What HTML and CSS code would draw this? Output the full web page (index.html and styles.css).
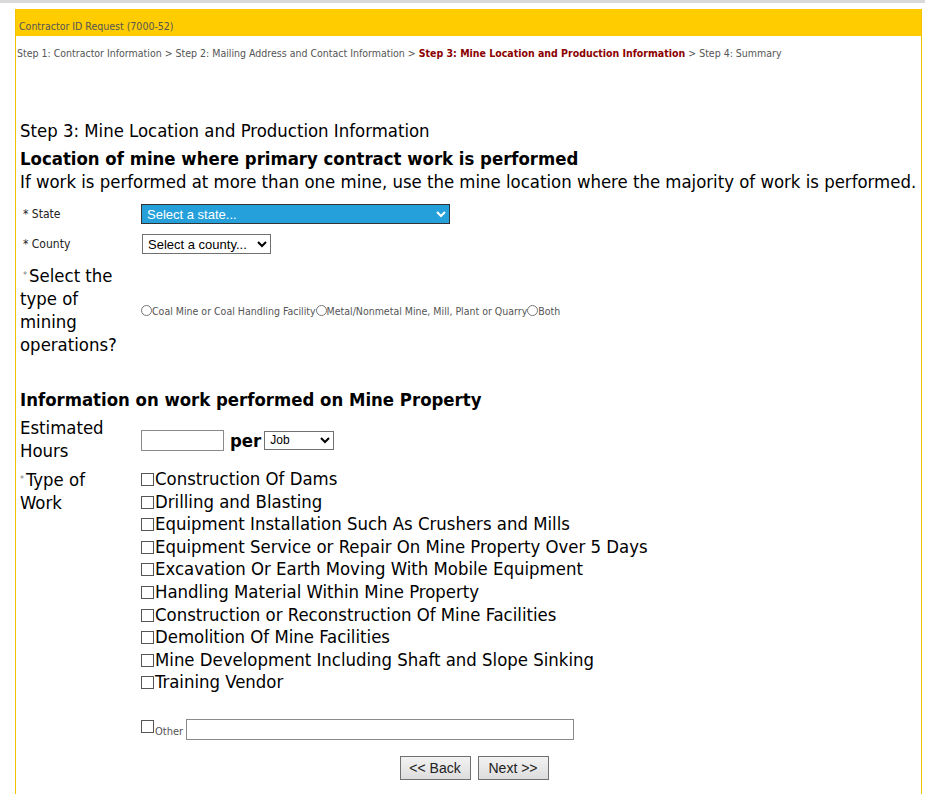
FILE: index.html
```html
<!DOCTYPE html>
<html lang="en">
<head>
  <meta charset="UTF-8">
  <title>Contractor ID Request (7000-52)</title>
  <link rel="stylesheet" href="styles.css">
</head>
<body>
<div class="topline"></div>
<div class="page">
  <div class="titlebar">Contractor ID Request (7000-52)</div>
  <div class="crumbs">
    Step 1: Contractor Information &gt; Step 2: Mailing Address and Contact Information &gt;
    <span class="current">Step 3: Mine Location and Production Information</span> &gt; Step 4: Summary
  </div>

  <div class="content">
    <div class="steptitle">Step 3: Mine Location and Production Information</div>
    <div class="section">Location of mine where primary contract work is performed</div>
    <div class="note">If work is performed at more than one mine, use the mine location where the majority of work is performed.</div>

    <div class="form first">
      <div class="lbl small">* State</div>
      <div class="fld">
        <select class="sel state"><option>Select a state...</option></select>
      </div>

      <div class="lbl small">* County</div>
      <div class="fld">
        <select class="sel county"><option>Select a county...</option></select>
      </div>

      <div class="lbl big mining"><span class="req">*</span>Select the type of mining operations?</div>
      <div class="fld radios">
        <label><input type="radio" name="op">Coal Mine or Coal Handling Facility</label><label><input type="radio" name="op">Metal/Nonmetal Mine, Mill, Plant or Quarry</label><label><input type="radio" name="op">Both</label>
      </div>
    </div>

    <div class="section second">Information on work performed on Mine Property</div>

    <div class="form">
      <div class="lbl big hrslbl">Estimated Hours</div>
      <div class="fld hours">
        <input type="text" class="txt hrs">
        <span class="per">per</span>
        <select class="sel job"><option>Job</option></select>
      </div>

      <div class="lbl big top"><span class="req">*</span>Type of Work</div>
      <div class="fld worklist">
        <label><input type="checkbox" class="box">Construction Of Dams</label>
        <label><input type="checkbox" class="box">Drilling and Blasting</label>
        <label><input type="checkbox" class="box">Equipment Installation Such As Crushers and Mills</label>
        <label><input type="checkbox" class="box">Equipment Service or Repair On Mine Property Over 5 Days</label>
        <label><input type="checkbox" class="box">Excavation Or Earth Moving With Mobile Equipment</label>
        <label><input type="checkbox" class="box">Handling Material Within Mine Property</label>
        <label><input type="checkbox" class="box">Construction or Reconstruction Of Mine Facilities</label>
        <label><input type="checkbox" class="box">Demolition Of Mine Facilities</label>
        <label><input type="checkbox" class="box">Mine Development Including Shaft and Slope Sinking</label>
        <label><input type="checkbox" class="box">Training Vendor</label>
      </div>

      <div class="lbl"></div>
      <div class="fld other">
        <label><input type="checkbox" class="box">Other</label>
        <input type="text" class="txt othertxt">
      </div>
    </div>

    <div class="buttons">
      <button class="btn">&lt;&lt; Back</button>
      <button class="btn">Next &gt;&gt;</button>
    </div>
  </div>
</div>
</body>
</html>
```

FILE: styles.css
```css
body {
  margin: 0;
  font-family: "DejaVu Sans Condensed", "DejaVu Sans", sans-serif;
  color: #000;
  background: #fff;
}
.topline {
  height: 3px;
  background-color: #d9d9d9;
}
.page {
  margin: 6px 3px 0 15px;
  border-left: 1px solid #f2c200;
  border-right: 1px solid #f2c200;
  min-height: 790px;
}
.titlebar {
  background-color: #ffcc00;
  height: 27px;
  line-height: 34px;
  padding-left: 3px;
  font-size: 10.5px;
  color: #555;
}
.crumbs {
  font-size: 10.5px;
  color: #555;
  padding: 10px 0 0 1px;
  line-height: 14px;
}
.crumbs .current {
  color: #8b0000;
  font-weight: bold;
}
.content {
  padding: 60px 0 0 4px;
  font-size: 18.4px;
}
.steptitle {
  line-height: 22px;
}
.section {
  font-weight: bold;
  line-height: 24px;
  margin-top: 5px;
}
.section.second {
  margin-top: 32px;
}
.note {
  line-height: 22px;
}
.form {
  display: grid;
  grid-template-columns: 121px 1fr;
  align-items: center;
}
.form.first {
  margin-top: 6px;
}
.lbl.small {
  font-size: 12px;
  color: #222;
  padding-left: 3px;
  height: 30px;
  line-height: 30px;
}
.sel.state, .sel.county {
  position: relative;
  top: -1px;
}
.lbl.big {
  line-height: 23px;
  padding-right: 14px;
}
.lbl.mining {
  padding-top: 5px;
  text-indent: 3px;
}
.lbl.hrslbl {
  padding-top: 4px;
}
.lbl.top {
  align-self: start;
  padding-top: 6px;
}
.req {
  display: inline-block;
  text-indent: 0;
  font-size: 9px;
  line-height: 9px;
  color: #777;
  vertical-align: 4px;
  margin-right: 2px;
}
.sel {
  font-family: "Liberation Sans", Arial, sans-serif;
  font-size: 13px;
  height: 20px;
  border: 1px solid #707070;
  background: #fff;
  padding: 0 1px;
  border-radius: 0;
}
.sel.state {
  width: 309px;
  background: #26a0da;
  color: #fff;
  border: 1px solid #333;
}
.sel.county {
  width: 129px;
  margin-left: 1px;
}
.radios {
  font-size: 10.5px;
  color: #555;
  padding-top: 7px;
}
.radios input {
  width: 11px;
  height: 11px;
  margin: 0;
  vertical-align: -1px;
}
.hours {
  display: flex;
  align-items: center;
  gap: 6px;
  padding-top: 6px;
}
.txt {
  border: 1px solid #8a8a8a;
  height: 21px;
  box-sizing: border-box;
  padding: 0 3px;
}
.txt.hrs {
  width: 83px;
}
.per {
  font-weight: bold;
}
.sel.job {
  width: 70px;
  height: 19px;
  font-size: 12px;
  margin-left: -3px;
}
.worklist {
  display: flex;
  flex-direction: column;
  padding-top: 6px;
}
.worklist label {
  line-height: 22.6px;
  white-space: nowrap;
}
.box {
  appearance: none;
  width: 13px;
  height: 13px;
  border: 1px solid #555;
  margin: 0 1px 0 0;
  vertical-align: -1px;
  box-sizing: border-box;
  background: #fff;
}
.other {
  display: flex;
  align-items: center;
  gap: 3px;
  margin-top: 25px;
  font-size: 11px;
  color: #555;
}
.other .box {
  vertical-align: 2px;
}
.othertxt {
  width: 388px;
}
.buttons {
  display: flex;
  justify-content: center;
  gap: 7px;
  margin-top: 16px;
  padding-left: 7px;
}
.btn {
  font-family: "Liberation Sans", Arial, sans-serif;
  font-size: 14px;
  color: #222;
  height: 24px;
  width: 71px;
  border: 1px solid #707070;
  background: linear-gradient(#f2f2f2, #dddddd);
  border-radius: 0;
}
```
